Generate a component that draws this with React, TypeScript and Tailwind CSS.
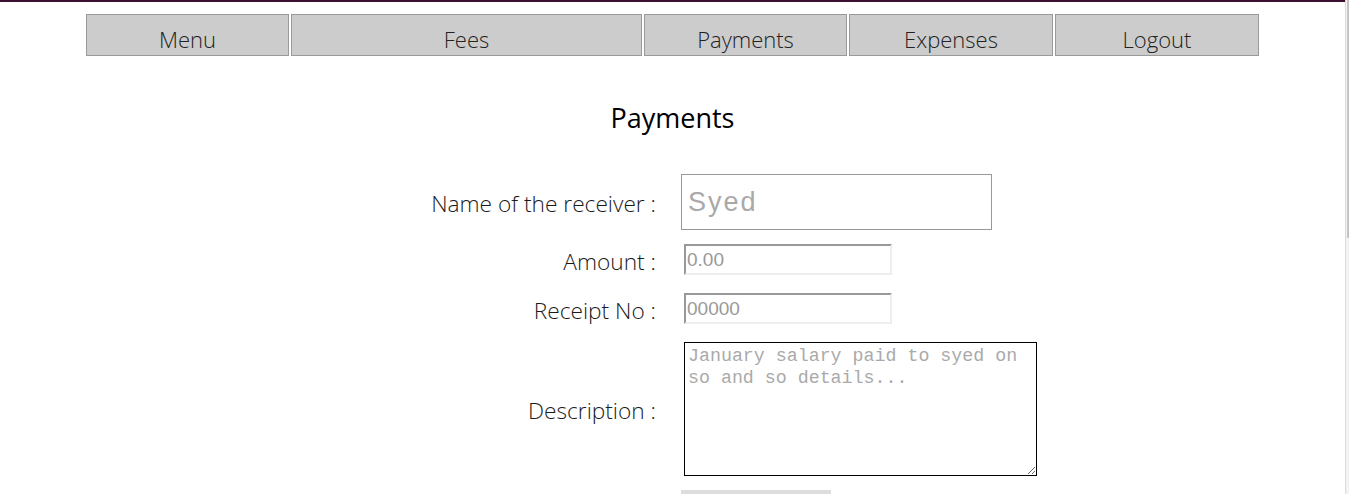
import React from "react";

const navItems = [
  { label: "Menu", w: "w-[203px]" },
  { label: "Fees", w: "w-[351px]" },
  { label: "Payments", w: "w-[203px]" },
  { label: "Expenses", w: "w-[204px]" },
  { label: "Logout", w: "w-[204px]" },
];

export default function App() {
  const sans = { fontFamily: '"Open Sans", "Noto Sans", sans-serif' };
  const labelCls =
    "pt-[4px] text-right text-[22.7px] font-light leading-[26px] text-[#1a1a1a]";
  const smallInput =
    "ml-[3px] h-[31px] w-[208px] border-2 border-t-[#999] border-l-[#999] border-b-[#eee] border-r-[#eee] px-[1px] text-[19px] placeholder:text-[#999] outline-none";
  return (
    <div className="flex h-[494px] w-full overflow-hidden bg-white" style={sans}>
      <div className="min-w-0 flex-1">
        <div className="h-[2px] bg-[#3a0f30]" />
        <nav className="mx-auto mt-[12px] flex w-[1173px] gap-[2px]">
          {navItems.map((n) => (
            <div
              key={n.label}
              className={`${n.w} h-[42px] border border-[#9a9a9a] bg-[#cccccc] pt-[10px] text-center text-[22px] font-light leading-[28px] text-[#222]`}
            >
              {n.label}
            </div>
          ))}
        </nav>
        <h1 className="mt-[44px] text-center text-[27px] leading-[36px] text-black">
          Payments
        </h1>
        <form className="mt-[38px] grid grid-cols-[656px_auto] items-center gap-x-[25px]">
          <label className={labelCls}>Name of the receiver :</label>
          <input
            placeholder="Syed"
            className="h-[56px] w-[311px] border border-[#999] px-[6px] text-[27px] tracking-[2px] placeholder:text-[#a9a9a9] outline-none"
            style={{ fontFamily: '"Liberation Sans", Arial, sans-serif' }}
          />

          <label className={`mt-[14px] ${labelCls}`}>Amount :</label>
          <input
            placeholder="0.00"
            className={`mt-[14px] ${smallInput}`}
            style={{ fontFamily: '"Liberation Sans", Arial, sans-serif' }}
          />

          <label className={`mt-[18px] ${labelCls}`}>Receipt No :</label>
          <input
            placeholder="00000"
            className={`mt-[18px] ${smallInput}`}
            style={{ fontFamily: '"Liberation Sans", Arial, sans-serif' }}
          />

          <label className={`mt-[18px] ${labelCls}`}>Description :</label>
          <textarea
            placeholder="January salary paid to syed on so and so details..."
            className="mt-[18px] ml-[3px] h-[134px] w-[353px] resize border border-black px-[3px] py-[2px] text-[18.3px] leading-[22px] placeholder:text-[#aaa] outline-none"
            style={{ fontFamily: '"Liberation Mono", "Courier New", monospace' }}
          />

          <div />
          <button
            type="button"
            className="mt-[14px] h-[32px] w-[150px] bg-[#dddddd]"
          />
        </form>
      </div>
      <div className="w-[4px] shrink-0 border-l border-[#dcdcdc] bg-[#f3f3f3]">
        <div className="ml-[1px] h-[238px] w-[2px] bg-[#c4c4c4]" />
      </div>
    </div>
  );
}
